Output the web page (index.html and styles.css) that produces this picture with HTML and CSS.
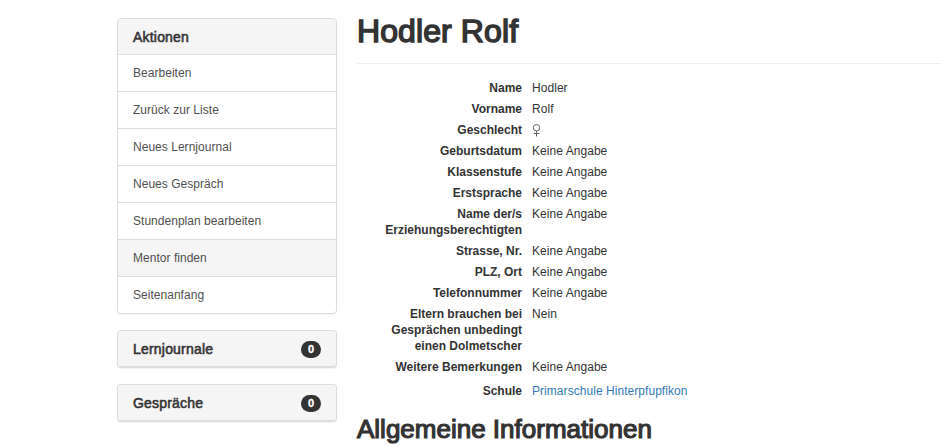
FILE: index.html
```html
<!DOCTYPE html>
<html lang="de">
<head>
<meta charset="utf-8">
<title>Hodler Rolf</title>
<link rel="stylesheet" href="styles.css">
</head>
<body>
<div class="page">
  <aside class="sidebar">
    <nav class="panel">
      <h2 class="panel-heading"><span>Aktionen</span></h2>
      <a class="item">Bearbeiten</a>
      <a class="item">Zurück zur Liste</a>
      <a class="item">Neues Lernjournal</a>
      <a class="item">Neues Gespräch</a>
      <a class="item">Stundenplan bearbeiten</a>
      <a class="item active">Mentor finden</a>
      <a class="item">Seitenanfang</a>
    </nav>
    <section class="panel collapsed"><h2 class="panel-heading"><span>Lernjournale</span><span class="badge">0</span></h2></section>
    <section class="panel collapsed"><h2 class="panel-heading"><span>Gespräche</span><span class="badge">0</span></h2></section>
  </aside>
  <main class="content">
    <h1>Hodler Rolf</h1>
    <dl class="details">
      <dt>Name</dt><dd>Hodler</dd>
      <dt>Vorname</dt><dd>Rolf</dd>
      <dt>Geschlecht</dt><dd><svg class="gender" viewBox="0 0 9 13" role="img" aria-label="weiblich"><circle cx="4.5" cy="3.7" r="3.2"/><path d="M4.5 7v5.5M1.5 9.5h6"/></svg></dd>
      <dt>Geburtsdatum</dt><dd>Keine Angabe</dd>
      <dt>Klassenstufe</dt><dd>Keine Angabe</dd>
      <dt>Erstsprache</dt><dd>Keine Angabe</dd>
      <dt>Name der/s<br>Erziehungsberechtigten</dt><dd>Keine Angabe</dd>
      <dt>Strasse, Nr.</dt><dd>Keine Angabe</dd>
      <dt>PLZ, Ort</dt><dd>Keine Angabe</dd>
      <dt>Telefonnummer</dt><dd>Keine Angabe</dd>
      <dt>Eltern brauchen bei<br>Gesprächen unbedingt<br>einen Dolmetscher</dt><dd>Nein</dd>
      <dt>Weitere Bemerkungen</dt><dd>Keine Angabe</dd>
      <dt class="school">Schule</dt><dd class="school"><a class="link">Primarschule Hinterpfupfikon</a></dd>
    </dl>
    <h2 class="section-title">Allgemeine Informationen</h2>
  </main>
</div>
</body>
</html>
```
FILE: styles.css
```css
* { box-sizing: border-box; }
html, body { height: 100%; overflow: hidden; }
body { margin: 0; background: #fff; color: #333; font: 12px/16px "Liberation Sans", Arial, sans-serif; }
h1, h2 { font-weight: normal; }
.page { display: flex; gap: 20px; padding: 18px 0 0 117px; }
.sidebar { flex: 0 0 220px; display: flex; flex-direction: column; gap: 16px; }
.panel { border: 1px solid #ddd; border-radius: 4px; box-shadow: 0 1px 1px rgba(0,0,0,.05); overflow: hidden; }
.collapsed { border-bottom-width: 2px; }
.panel-heading { display: flex; align-items: center; justify-content: space-between; height: 35px; margin: 0; padding: 1px 15px 0; background: #f5f5f5; font-size: 14px; letter-spacing: .2px; -webkit-text-stroke: .55px #333; }
.item { display: block; height: 37px; padding: 10px 15px; border-top: 1px solid #ddd; color: #505050; letter-spacing: .03px; }
.active { background: #f5f5f5; }
.badge { width: 20px; height: 17px; border-radius: 9px; background: #333; color: #fff; font-size: 11px; font-weight: bold; line-height: 17px; text-align: center; letter-spacing: 0; -webkit-text-stroke: .3px #fff; }
.content { flex: 1; min-width: 0; }
h1 { height: 46px; margin: 0 0 16px; border-bottom: 1px solid #eee; font-size: 32px; line-height: 26px; letter-spacing: .1px; -webkit-text-stroke: 1.5px #333; }
.details { display: grid; grid-template-columns: 165px 1fr; column-gap: 10px; row-gap: 5px; margin: 0; }
dt { font-weight: bold; text-align: right; }
dd { margin: 0; letter-spacing: .05px; }
.school { margin-top: 3px; }
.gender { display: block; width: 9px; height: 13px; margin-top: 2px; fill: none; stroke: #555; stroke-width: .9; }
.link { color: #337ab7; }
.section-title { margin: 15px 0 0; font-size: 26px; line-height: 30px; -webkit-text-stroke: 1.2px #333; }
```
